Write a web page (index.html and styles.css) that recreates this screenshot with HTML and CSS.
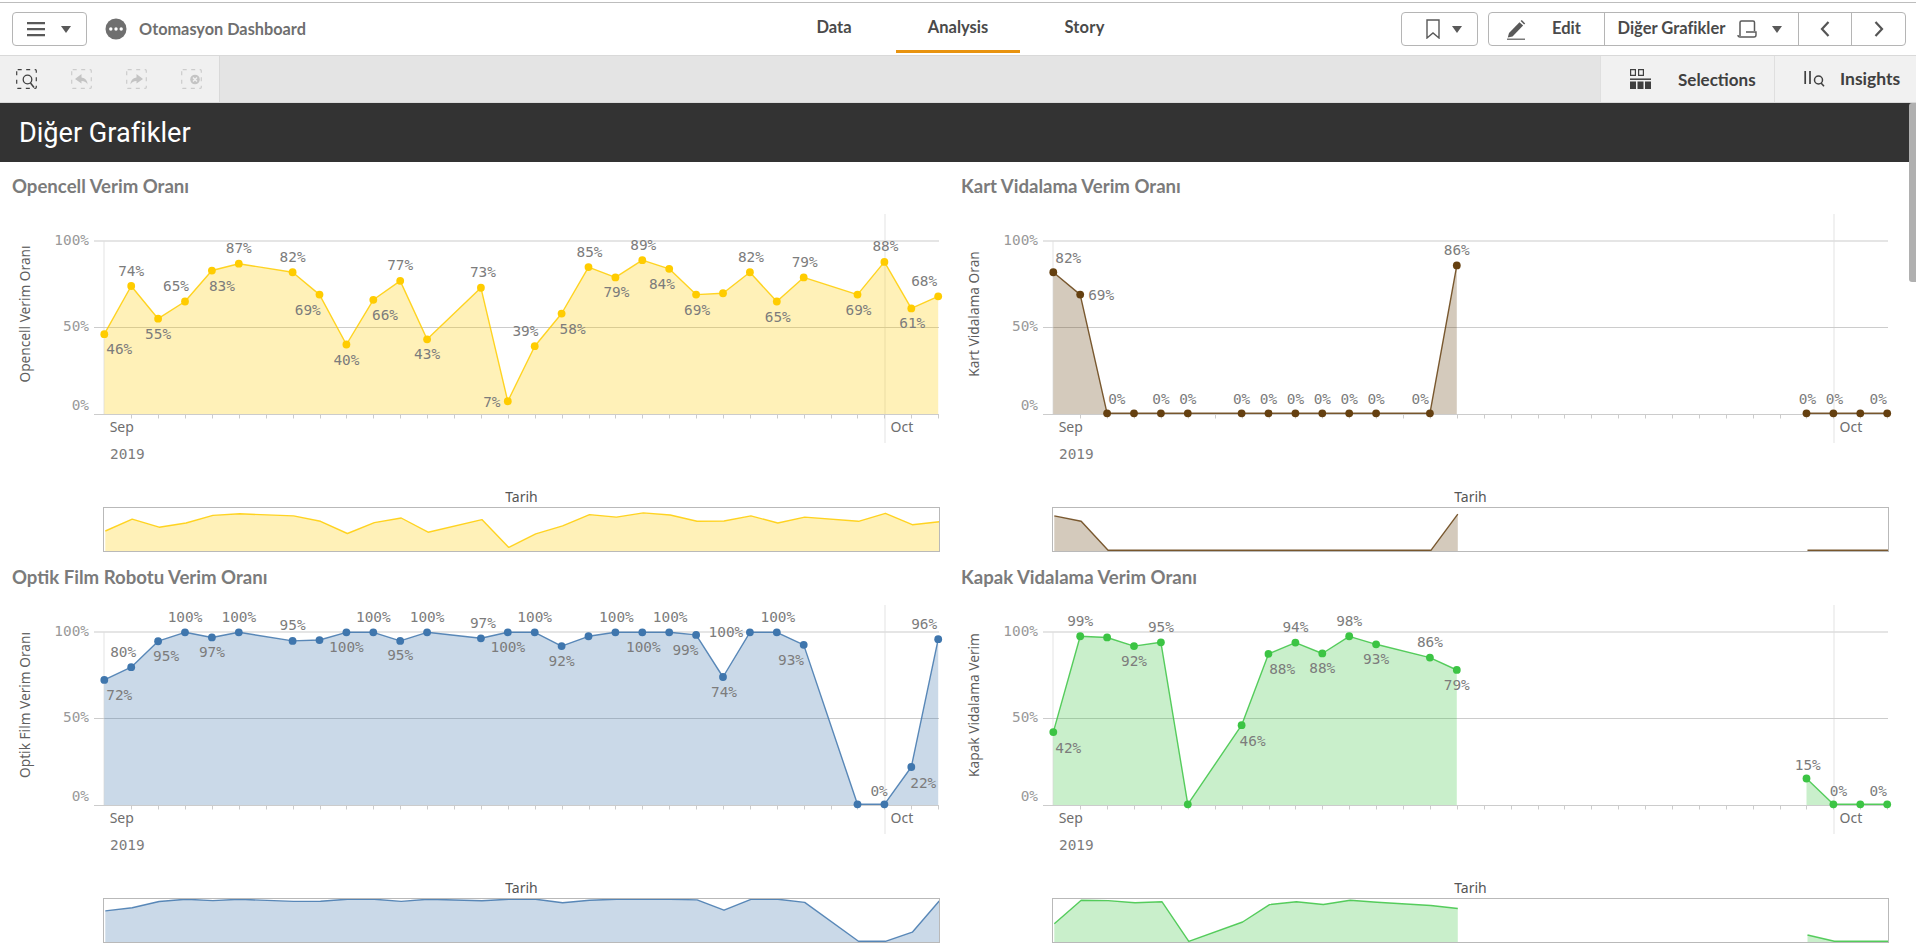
FILE: index.html
```html
<!DOCTYPE html>
<html lang="tr">
<head>
<meta charset="utf-8">
<title>Otomasyon Dashboard</title>
<link rel="stylesheet" href="styles.css">
</head>
<body>
<div class="app">
  <header class="topbar">
    <div class="top-left">
      <button class="btn menu-btn">
        <svg class="ic" width="18" height="18" viewBox="0 0 18 18"><path d="M0 2h18v2.2H0zM0 8h18v2.2H0zM0 14h18v2.2H0z" fill="#595959"/></svg>
        <span class="caret"></span>
      </button>
      <svg class="app-dot" width="22" height="22" viewBox="0 0 22 22"><circle cx="11" cy="11" r="10.5" fill="#6f6f6f"/><circle cx="5.8" cy="11" r="1.7" fill="#fff"/><circle cx="11" cy="11" r="1.7" fill="#fff"/><circle cx="16.2" cy="11" r="1.7" fill="#fff"/></svg>
      <span class="app-name lbl">Otomasyon Dashboard</span>
    </div>
    <nav class="tabs">
      <a class="tab">Data</a>
      <a class="tab active">Analysis</a>
      <a class="tab">Story</a>
    </nav>
    <div class="top-right">
      <button class="btn mark-btn">
        <svg width="14" height="20" viewBox="0 0 14 20"><path d="M1 1h12v18l-6-5-6 5z" fill="none" stroke="#595959" stroke-width="1.4"/></svg>
        <span class="caret"></span>
      </button>
      <div class="btn-group">
        <div class="seg seg-edit">
          <svg width="20" height="21" viewBox="0 0 20 21"><path d="M3 14 13.5 3.2l3.6 3.4L6.5 17.4 1.8 18.4z" fill="#595959"/><path d="M14.6 2.1l1.2-1.1 3.4 3.4-1.1 1.2z" fill="#595959"/><path d="M1 20.2h18" stroke="#595959" stroke-width="1.2"/></svg>
          <span class="lbl">Edit</span>
        </div>
        <div class="seg seg-sheet">
          <span class="lbl">Diğer Grafikler</span>
          <svg width="20" height="18" viewBox="0 0 20 18"><path d="M3 16V2.500Q3 1 4.500 1h11.500q1.500 0 1.500 1.500V11" fill="none" stroke="#595959" stroke-width="1.500"/><path d="M9 12h10v3q0 2-2 2H3q-2 0-2-2" fill="none" stroke="#595959" stroke-width="1.400"/></svg>
          <span class="caret"></span>
        </div>
        <div class="seg seg-nav"><svg width="10" height="16" viewBox="0 0 10 16"><path d="M8.500 1 2 8l6.500 7" fill="none" stroke="#555" stroke-width="2.200"/></svg></div>
        <div class="seg seg-nav"><svg width="10" height="16" viewBox="0 0 10 16"><path d="M1.500 1 8 8l-6.500 7" fill="none" stroke="#555" stroke-width="2.200"/></svg></div>
      </div>
    </div>
  </header>

  <div class="toolbar">
    <div class="tools">
      <svg width="21" height="20" viewBox="0 0 21 20"><rect x=".7" y=".7" width="19.600" height="18.600" rx="1" fill="none" stroke="#404040" stroke-width="1.200" stroke-dasharray="4 4.500"/><circle cx="11.500" cy="10.500" r="4.300" fill="none" stroke="#404040" stroke-width="1.300"/><path d="m14.500 14 3.500 4.500" stroke="#404040" stroke-width="1.500"/></svg>
      <svg width="21" height="20" viewBox="0 0 21 20"><rect x=".7" y=".7" width="19.600" height="18.600" rx="1" fill="none" stroke="#ccc" stroke-width="1.200" stroke-dasharray="4 4.500"/><path d="M10.500 5 4 10l6.500 4.500V12q4.500 0 6 3.500 0-6-6-7z" fill="#c4c4c4"/></svg>
      <svg width="21" height="20" viewBox="0 0 21 20"><rect x=".7" y=".7" width="19.600" height="18.600" rx="1" fill="none" stroke="#ccc" stroke-width="1.200" stroke-dasharray="4 4.500"/><path d="M10.500 5 17 10l-6.500 4.500V12q-4.500 0-6 3.500 0-6 6-7z" fill="#c4c4c4"/></svg>
      <svg width="21" height="20" viewBox="0 0 21 20"><rect x=".7" y=".7" width="19.600" height="18.600" rx="1" fill="none" stroke="#ccc" stroke-width="1.200" stroke-dasharray="4 4.500"/><circle cx="14" cy="10.500" r="4.800" fill="#c4c4c4"/><path d="m12 8.500 4 4m0-4-4 4" stroke="#f0f0f0" stroke-width="1.500"/></svg>
    </div>
    <div class="toolbar-fill"></div>
    <div class="tool-tab tab-sel">
      <svg width="21" height="20" viewBox="0 0 21 20"><path d="M.6.600h4.800v5.800H.6zM8.600.600h4.800v5.800H8.600z" fill="none" stroke="#404040" stroke-width="1.200"/><path d="M0 10.200h21" stroke="#404040" stroke-width="1.500"/><path d="M0 12.500h6v7.500H0zM7.500 12.500h6v7.500h-6zM15 12.500h6v7.500h-6z" fill="#404040"/></svg>
      <span>Selections</span>
    </div>
    <div class="tool-tab tab-ins">
      <svg width="21" height="16" viewBox="0 0 21 16"><path d="M1.200 0v13M6 0v13" stroke="#404040" stroke-width="1.700"/><circle cx="14.500" cy="9" r="4" fill="none" stroke="#404040" stroke-width="1.500"/><path d="m17 12 3 3.300" stroke="#404040" stroke-width="1.600"/></svg>
      <span class="lbl">Insights</span>
    </div>
  </div>

  <div class="band"><h1>Diğer Grafikler</h1></div>

  <main class="grid">
    <section class="card"><h2>Opencell Verim Oranı</h2><svg class="chart" data-chart="opencell" width="949" height="358"></svg></section>
    <section class="card"><h2>Kart Vidalama Verim Oranı</h2><svg class="chart" data-chart="kart" width="949" height="358"></svg></section>
    <section class="card"><h2>Optik Film Robotu Verim Oranı</h2><svg class="chart" data-chart="optik" width="949" height="358"></svg></section>
    <section class="card"><h2>Kapak Vidalama Verim Oranı</h2><svg class="chart" data-chart="kapak" width="949" height="358"></svg></section>
  </main>
  <div class="thumb"></div>
</div>
<script src="script.js"></script>
</body>
</html>
```
FILE: styles.css
```css
* { box-sizing: border-box; }
html, body { margin: 0; height: 100%; overflow: hidden; background: #fff; }
body { font-family: "Lato", "Noto Sans", sans-serif; color: #595959; }
.app { position: relative; height: 943px; overflow: hidden; padding-top: 2px; }

.topbar { height: 54px; border-top: 1px solid #bdbdbd; border-bottom: 1px solid #d9d9d9; display: grid; grid-template-columns: 1fr auto 1fr; align-items: center; }
.top-left { display: flex; align-items: center; padding-left: 12px; }
.top-right { display: flex; align-items: center; justify-content: flex-end; padding-right: 10px; gap: 10px; }
.btn { background: #fff; border: 1px solid #b5b5b5; border-radius: 4px; height: 34px; display: flex; align-items: center; padding: 0; font: inherit; }
.caret { display: inline-block; width: 0; height: 0; border-left: 5px solid transparent; border-right: 5px solid transparent; border-top: 7px solid #595959; }
.lbl { padding-bottom: 2px; }
.menu-btn { width: 75px; padding-left: 14px; gap: 16px; }
.app-dot { margin-left: 18px; }
.app-name { margin-left: 12px; font-weight: 700; font-size: 16.300px; color: #6f6f6f; }

.tabs { display: flex; height: 50px; align-self: start; }
.tab { width: 124px; display: flex; align-items: center; justify-content: center; font-weight: 700; font-size: 16.500px; color: #4a4a4a; border-bottom: 3px solid transparent; padding-top: 1px; }
.tab.active { border-bottom-color: #e8930f; }
.tab:last-child { padding-left: 5px; letter-spacing: .2px; }

.mark-btn { width: 77px; padding-left: 24px; gap: 12px; }
.btn-group { display: flex; height: 34px; border: 1px solid #b5b5b5; border-radius: 4px; width: 418px; }
.seg { display: flex; align-items: center; font-weight: 700; font-size: 16.500px; color: #4a4a4a; border-left: 1px solid #b5b5b5; }
.seg:first-child { border-left: 0; }
.seg-edit { width: 116px; padding-left: 17px; gap: 26px; }
.seg-sheet { width: 194px; padding-left: 12px; }
.seg-sheet svg { margin: 0 15px 0 12px; }
.seg-nav { width: 54px; justify-content: center; }

.toolbar { height: 47px; display: flex; background: #e4e4e4; border-bottom: 1px solid #d9d9d9; }
.tools { width: 220px; background: #f0f0f0; border-right: 1px solid #d9d9d9; display: flex; align-items: center; padding-left: 16px; gap: 34px; }
.toolbar-fill { flex: 1; }
.tool-tab { background: #f1f1f1; display: flex; align-items: center; font-weight: 700; font-size: 17px; color: #404040; border-left: 1px solid #dfdfdf; }
.tab-sel { width: 174px; padding-left: 29px; gap: 27px; }
.tab-ins { width: 142px; padding-left: 29px; gap: 15px; font-size: 17.500px; }

.band { height: 59px; background: #333; display: flex; align-items: center; padding-left: 19px; }
.band h1 { margin: 0; font-family: "Roboto", sans-serif; font-weight: 400; font-size: 27.100px; color: #fff; }

.grid { display: grid; grid-template-columns: 949px 967px; grid-auto-rows: 391px; }
.card h2 { margin: 0; height: 33px; padding: 13px 0 0 12px; font-size: 18.600px; line-height: 22px; font-weight: 700; color: #7b7b7b; }
.chart { display: block; overflow: visible; }

.thumb { position: absolute; right: 0; top: 103px; width: 7px; height: 179px; background: #b0b0b0; border-radius: 3px 0 0 3px; }

.t-mono { font-family: "DejaVu Sans Mono", monospace; font-size: 14.400px; fill: #7c7c7c; dominant-baseline: central; }
.t-axis { fill: #999; text-anchor: end; }
.t-data { text-anchor: middle; }
.t-sans { font-family: "Noto Sans", sans-serif; font-size: 14px; fill: #6e6e6e; dominant-baseline: central; }
.t-ytitle { text-anchor: middle; fill: #5f5f5f; font-size: 13.700px; }
.t-mid { text-anchor: middle; fill: #555; }
.g-strong { stroke: #ddd; stroke-width: 1.500; fill: none; }
.g-line { stroke: #ccc; stroke-width: 1; fill: none; }
.g-light { stroke: #ececec; stroke-width: 1.500; fill: none; }
.g-mini { stroke: #b9b9b9; stroke-width: 1; fill: none; }
.area { opacity: .28; stroke: none; }
.line { fill: none; stroke-width: 1.400; stroke-opacity: .85; stroke-linejoin: round; }
```
FILE: script.js
```js
var NS = 'http://www.w3.org/2000/svg';
var A = -15.5, B = 15;
var CHARTS = {
  opencell: {
    color: '#ffcc00', ytitle: 'Opencell Verim Oranı',
    segs: [[
      [0,46,15,B],[1,74,0,A],[2,55,0,B],[3,65,-9,A],[4,83,10,B],[5,87,0,A],[7,82,0,A],[8,69,-11.7,B],
      [9,40,0,B],[10,66,11.7,B],[11,77,0,A],[12,43,0,B],[14,73,2,A],[15,7,-16,.5],[16,39,-9.3,A],
      [17,58,11,B],[18,85,1,A],[19,79,1,B],[20,89,1,A],[21,84,-7.3,B],[22,69,1,B],[23,69.800],
      [24,82,1,A],[25,65,1,B],[26,79,1,A],[28,69,1,B],[29,88,1,A],[30,61,1,B],[31,68,-14,A]
    ]]
  },
  kart: {
    color: '#654010', ytitle: 'Kart Vidalama Oran',
    segs: [[
      [0,82,15,-14.700],[1,69,21,0],[2,0,9.700,-14.700],[3,0],[4,0,0,-14.700],[5,0,0,-14.700],[7,0,0,-14.700],
      [8,0,0,-14.700],[9,0,0,-14.700],[10,0,0,-14.700],[11,0,0,-14.700],[12,0,0,-14.700],[14,0,-9.700,-14.700],[15,86,0,A]
    ],[
      [28,0,1,-14.700],[29,0,1,-14.700],[30,0],[31,0,-9,-14.700]
    ]]
  },
  optik: {
    color: '#3f76ad', ytitle: 'Optik Film Verim Oranı',
    segs: [[
      [0,72.300,15,B],[1,79.700,-8,A],[2,94.800,8,B],[3,100,0,A],[4,97,0,14.300],[5,100,0,A],[7,95,0,A],[8,95.500],
      [9,100,0,14.500],[10,100,0,A],[11,95,0,14.300],[12,100,0,A],[14,96.500,2,A],[15,100,0,14.500],[16,100,0,A],
      [17,92,0,14.500],[18,97.700],[19,100,1,A],[20,100,1,14.500],[21,100,1,A],[22,98.500,-10.700,14.700],
      [23,74,1,B],[24,100,-24,0],[25,100,1,A],[26,92.700,-12.700,B],[28,0],[29,0,-5.300,-13.300],
      [30,21.700,12,15.700],[31,96,-14,-15.300]
    ]]
  },
  kapak: {
    color: '#3cc444', ytitle: 'Kapak Vidalama Verim',
    segs: [[
      [0,42,15,15.700],[1,97.700,0,-15.300,'99%'],[2,97],[3,92,0,14.700],[4,94.200,0,-15.700,'95%'],[5,0],
      [7,46,11,16.300],[8,87.400,13.700,B,'88%'],[9,94,0,-15.700],[10,87.700,0,14.300,'88%'],[11,97.700,0,-15.300,'98%'],
      [12,93,0,B],[14,85.300,0,-15.700,'86%'],[15,78.100,0,B,'79%']
    ],[
      [28,15,1.300,-13.700],[29,0,5,-13.300],[30,0],[31,0,-9,-13.300]
    ]]
  }
};

function el(name, attrs, text) {
  var node = document.createElementNS(NS, name);
  for (var k in attrs) node.setAttribute(k, attrs[k]);
  if (text !== undefined) node.textContent = text;
  return node;
}
var X0 = 104.300, DX = 26.900, Y0 = 218.300, SY = 1.720;
function px(i) { return X0 + DX * i; }
function py(v) { return Y0 - SY * v; }
var MX0 = 105.300, MY0 = 355.300, MSY = .42;
function mx(i) { return MX0 + DX * i; }
function my(v) { return MY0 - MSY * v; }
function pts(seg, fx, fy) { return seg.map(function (p) { return fx(p[0]).toFixed(1) + ',' + fy(p[1]).toFixed(1); }).join(' '); }

function draw(svg, c) {
  var i, add = function (n) { svg.appendChild(n); };
  add(el('path', { 'class': 'g-light', d: 'M104 46V219' }));
  add(el('path', { 'class': 'g-light', d: 'M885 19V248' }));
  add(el('path', { 'class': 'g-strong', d: 'M94 46H939' }));
  add(el('path', { 'class': 'g-line', d: 'M94 132.500H939' }));
  add(el('path', { 'class': 'g-line', 'stroke-width': 1.500, d: 'M94 219.500H939' }));
  for (i = 1; i <= 31; i++) {
    var tx = Math.round(px(i)) + .5;
    add(el('path', { 'class': 'g-line', d: 'M' + tx + ' 219V223.500' }));
  }
  [['100%', 45], ['50%', 131], ['0%', 210]].forEach(function (t) {
    add(el('text', { 'class': 't-mono t-axis', x: 89, y: t[1] }, t[0]));
  });
  add(el('text', { 'class': 't-ytitle t-sans', transform: 'translate(24.500 119) rotate(-90)' }, c.ytitle));
  add(el('text', { 'class': 't-sans', x: 109.700, y: 231.300 }, 'Sep'));
  add(el('text', { 'class': 't-sans', x: 890.500, y: 231.300 }, 'Oct'));
  add(el('text', { 'class': 't-mono', x: 110, y: 259 }, '2019'));
  add(el('text', { 'class': 't-sans t-mid', x: 521.500, y: 301.700 }, 'Tarih'));

  c.segs.forEach(function (seg) {
    var first = seg[0][0], last = seg[seg.length - 1][0];
    add(el('polygon', { 'class': 'area', fill: c.color, points: px(first) + ',219 ' + pts(seg, px, py) + ' ' + px(last) + ',219' }));
    add(el('polyline', { 'class': 'line', stroke: c.color, points: pts(seg, px, py) }));
    add(el('polygon', { 'class': 'area', fill: c.color, points: mx(first) + ',356 ' + pts(seg, mx, my) + ' ' + mx(last) + ',356' }));
    add(el('polyline', { 'class': 'line', stroke: c.color, points: pts(seg, mx, my) }));
  });
  add(el('rect', { 'class': 'g-mini', x: 103.500, y: 312.500, width: 836, height: 44 }));
  c.segs.forEach(function (seg) {
    seg.forEach(function (p) {
      add(el('circle', { cx: px(p[0]), cy: py(p[1]), r: 3.900, fill: c.color }));
      if (p.length > 2) {
        add(el('text', { 'class': 't-mono t-data', x: px(p[0]) + p[2], y: py(p[1]) + p[3] }, p[4] || Math.round(p[1]) + '%'));
      }
    });
  });
}
Array.prototype.forEach.call(document.querySelectorAll('svg[data-chart]'), function (svg) {
  draw(svg, CHARTS[svg.getAttribute('data-chart')]);
});
```
